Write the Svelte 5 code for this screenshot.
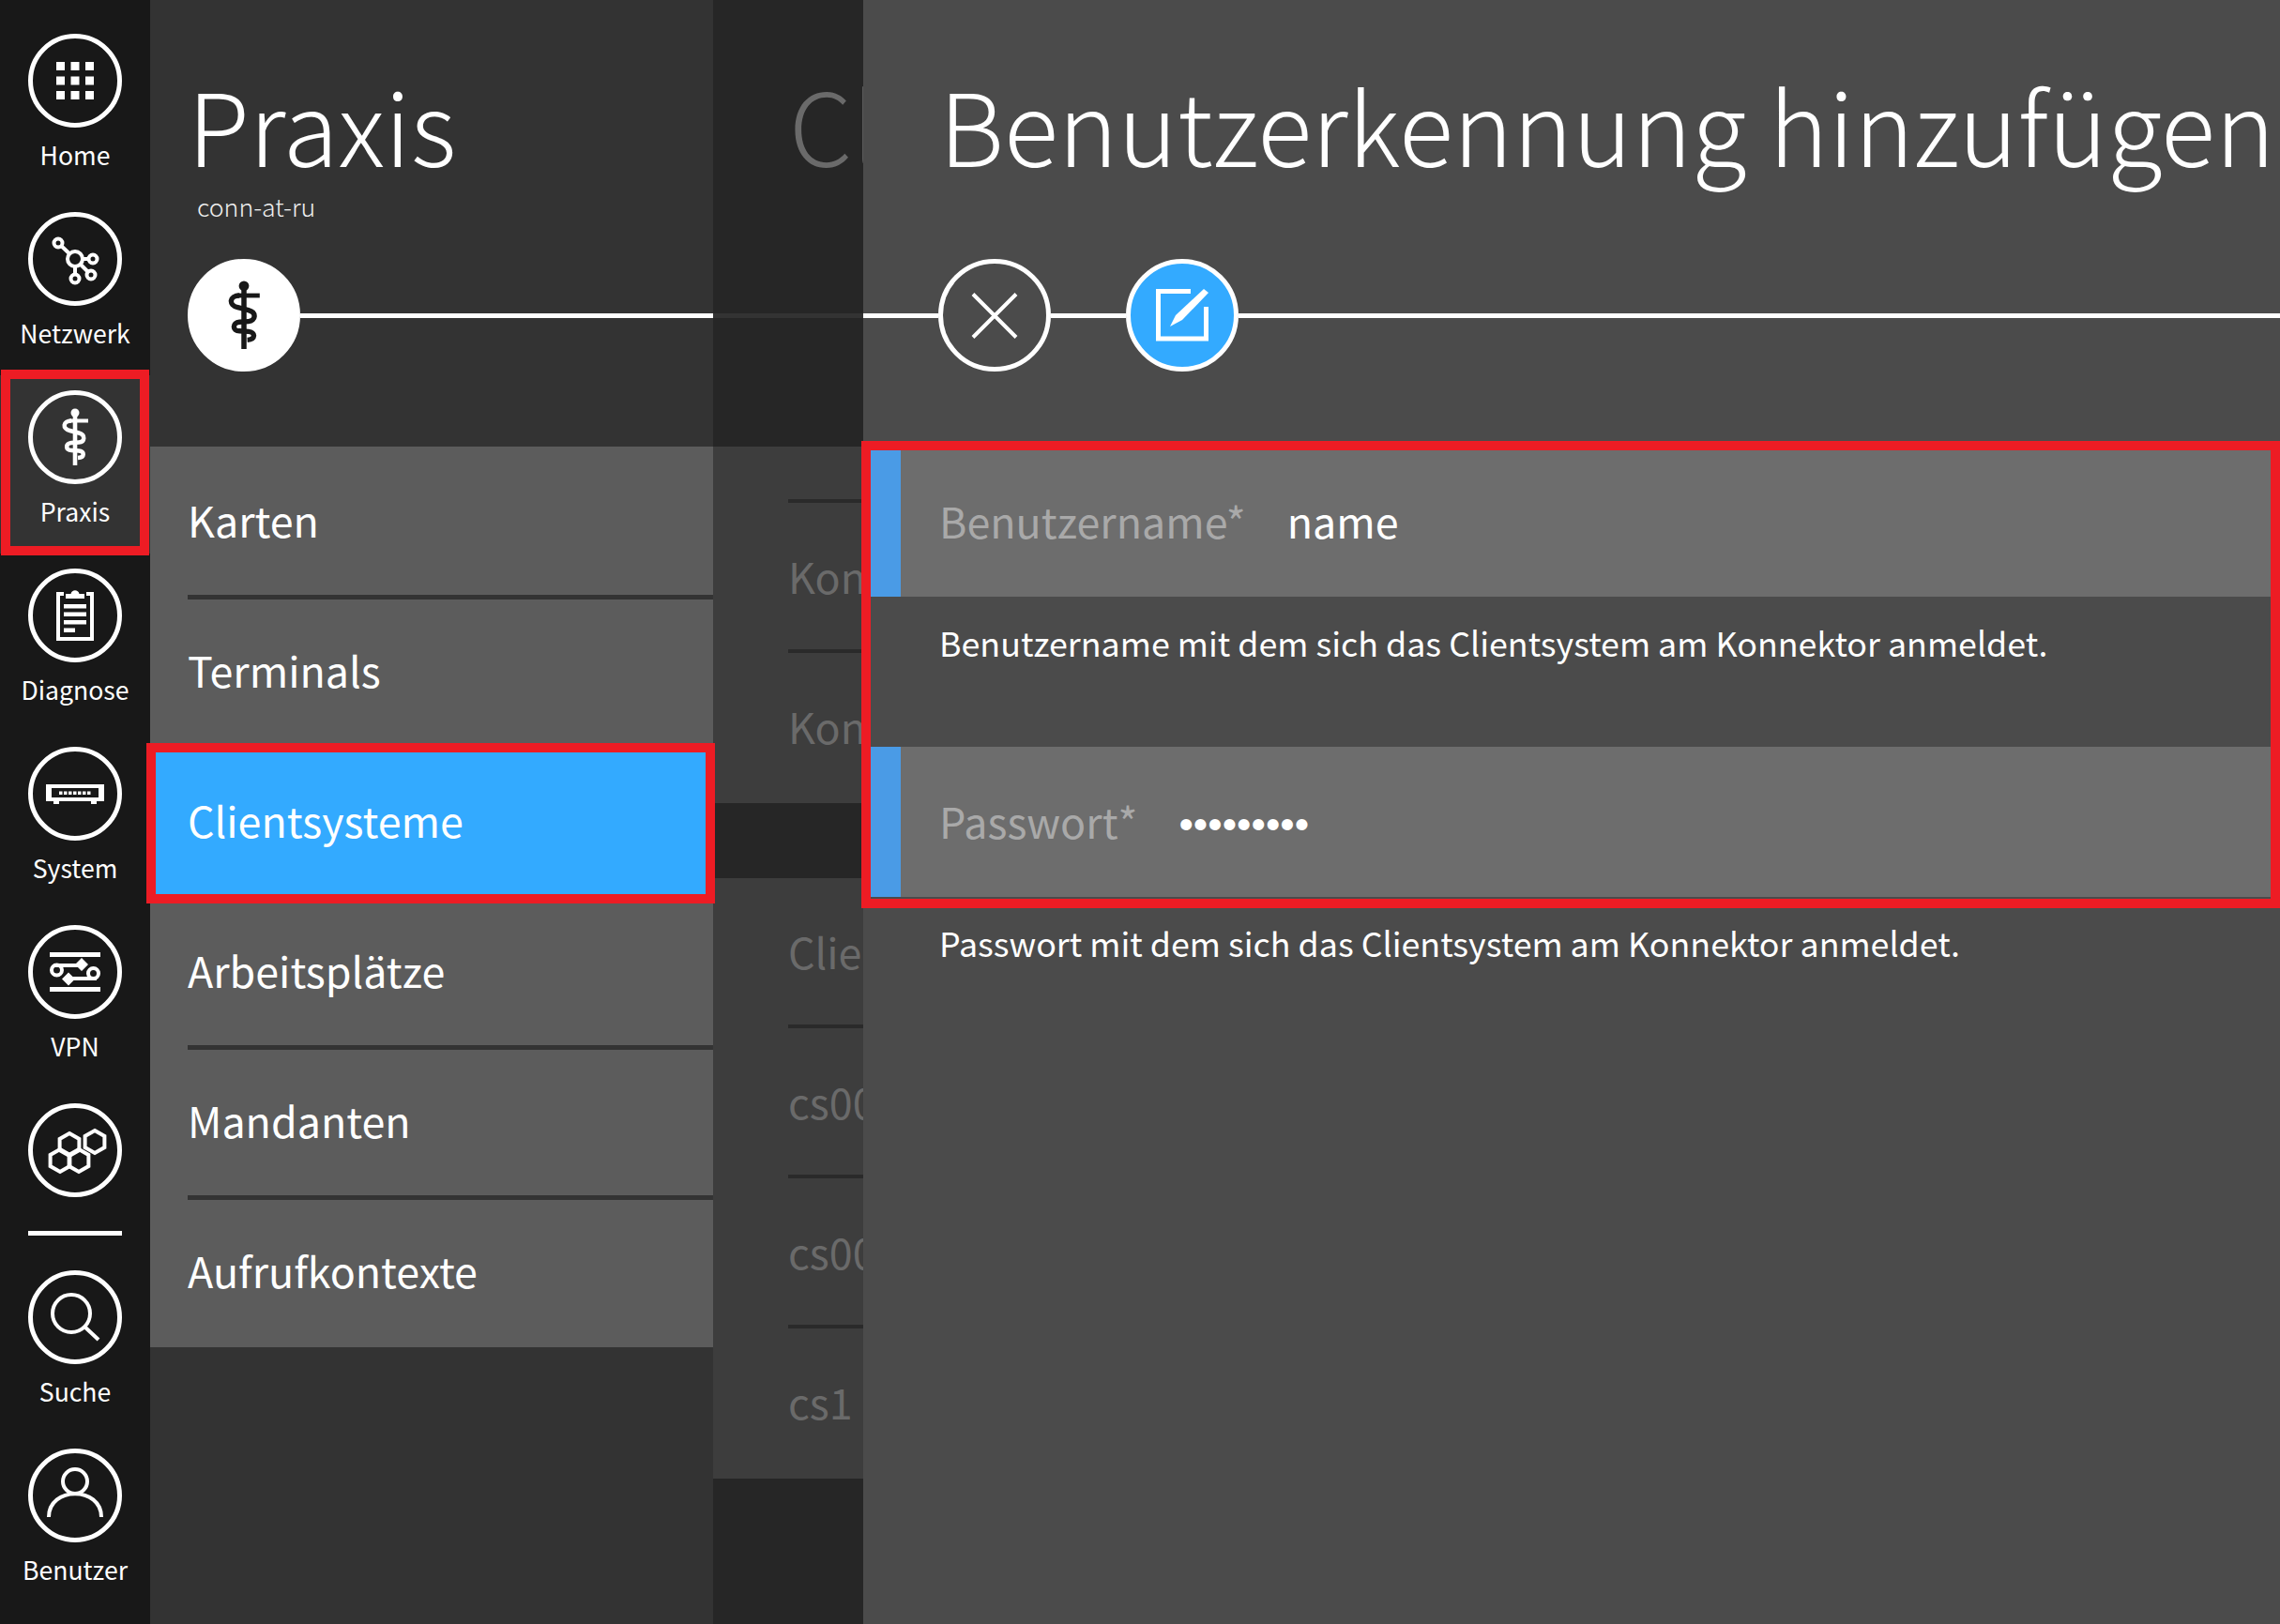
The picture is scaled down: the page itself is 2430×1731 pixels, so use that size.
<script lang="ts">
	const menu = ['Karten', 'Terminals', 'Clientsysteme', 'Arbeitsplätze', 'Mandanten', 'Aufrufkontexte'];
	const activeMenu = 'Clientsysteme';
	const hexes = [
		[44, 44],
		[34, 61],
		[54, 61],
		[71, 41]
	];
	const hexPoints = (cx: number, cy: number) => {
		const r = 12;
		const w = r * 0.866;
		return `${cx},${cy - r} ${cx + w},${cy - r / 2} ${cx + w},${cy + r / 2} ${cx},${cy + r} ${cx - w},${cy + r / 2} ${cx - w},${cy - r / 2}`;
	};
</script>

{#snippet rod()}
	<path class="fill" d="M47.700 24h4.600v56h-4.600z" />
	<circle class="fill" cx="50" cy="24" r="4.500" />
	<path class="fill" d="M44 30.500h20v4H44z" />
	<path class="snake" d="M46 32.500C37 32.500 36 41 44.500 43l9.500 2.500c7.500 2 6.500 9.500 0 10l-8 .5c-6.500 .5-6.500 8 0 8l8 .5c6.500 .5 6.500 7-1 7.500" />
{/snippet}

{#snippet navIcon(name: string)}
	<svg class="ring-icon" viewBox="0 0 100 100">
		<circle class="ring" cx="50" cy="50" r="47.500" />
		{#if name === 'Home'}
			{#each [30, 45.5, 61] as y}
				{#each [30, 45.5, 61] as x}
					<rect class="fill" {x} {y} width="9" height="9" />
				{/each}
			{/each}
		{:else if name === 'Netzwerk'}
			<path d="M32 33l18 17M50 50l19 0M50 50v21M50 50l17 17" />
			<circle class="hole" cx="50" cy="50" r="8" />
			<circle class="hole" cx="32" cy="33" r="4.500" />
			<circle class="hole" cx="69" cy="50" r="4.500" />
			<circle class="hole" cx="50" cy="71" r="4.500" />
			<circle class="hole" cx="67" cy="67" r="4.500" />
		{:else if name === 'Praxis'}
			{@render rod()}
		{:else if name === 'Diagnose'}
			<path d="M38 27H32V75H68V27H62" />
			<path class="fill" d="M40 32v-5h5.500c1-5 8-5 9 0H60v5z" />
			<path class="fill" d="M38 38h24v4.500H38zM38 46.500h24V51H38zM38 55h24v4.500H38zM38 63.500h12V68H38z" />
		{:else if name === 'System'}
			<path class="fill" fill-rule="evenodd" d="M19 40H81V58H19zM25 44V54H75V44z" />
			<path class="fill" d="M27 58h6v3h-6zM67 58h6v3h-6z" />
			{#each [33, 38, 43, 48, 53, 58, 63] as x}
				<rect class="fill" {x} y="47.500" width="3.500" height="3.500" />
			{/each}
		{:else if name === 'VPN'}
			<path class="fill" d="M23 29h54v5H23zM23 66h54v5H23z" />
			<path d="M27 43H54M73 57H46" />
			<circle cx="30.500" cy="48" r="5.500" />
			<circle cx="69.500" cy="51.500" r="5.500" />
			<path class="fill" d="M57 35l7 7-7 7-7-7zM43 50.500l7 7-7 7-7-7z" />
		{:else if name === 'Module'}
			{#each hexes as [x, y]}
				<polygon points={hexPoints(x, y)} />
			{/each}
		{:else if name === 'Suche'}
			<circle cx="46" cy="46" r="20" />
			<path d="M60 60l15 14" />
		{:else if name === 'Benutzer'}
			<circle cx="50" cy="35" r="13" />
			<path d="M22 73c0-33 56-33 56 0" />
		{/if}
	</svg>
{/snippet}

{#snippet navItem(name: string, label: string, active = false)}
	<div class="nav-item" class:active class:bare={!label}>
		{@render navIcon(name)}
		{#if label}<span>{label}</span>{/if}
	</div>
{/snippet}

<div class="page">
	<nav class="sidebar">
		{@render navItem('Home', 'Home')}
		{@render navItem('Netzwerk', 'Netzwerk')}
		{@render navItem('Praxis', 'Praxis', true)}
		{@render navItem('Diagnose', 'Diagnose')}
		{@render navItem('System', 'System')}
		{@render navItem('VPN', 'VPN')}
		{@render navItem('Module', '')}
		<hr />
		{@render navItem('Suche', 'Suche')}
		{@render navItem('Benutzer', 'Benutzer')}
	</nav>

	<section class="panel praxis">
		<header>
			<h1>Praxis</h1>
			<p class="sub">conn-at-ru</p>
			<div class="track">
				<div class="round solid">
					<svg viewBox="0 0 100 100">{@render rod()}</svg>
				</div>
				<i></i>
			</div>
		</header>
		<ul class="menu">
			{#each menu as item}
				<li class:active={item === activeMenu}>{item}</li>
			{/each}
		</ul>
	</section>

	<section class="panel behind">
		<header>
			<h1>Clientsysteme</h1>
			<div class="track"><i></i></div>
		</header>
		<div class="group first">
			<div class="row stub"></div>
			<div class="row">Konnektor</div>
			<div class="row">Konnektor</div>
		</div>
		<div class="group">
			<div class="row">Clientsystem</div>
			<div class="row">cs001</div>
			<div class="row">cs002</div>
			<div class="row">cs1</div>
		</div>
	</section>

	<section class="panel form">
		<header>
			<h1>Benutzerkennung hinzufügen</h1>
			<div class="track">
				<i class="lead"></i>
				<div class="round close">
					<svg viewBox="0 0 120 120"><path d="M37 37.500l46 46M83 37.500l-46 46" /></svg>
				</div>
				<i class="link"></i>
				<div class="round primary">
					<svg viewBox="0 0 120 120">
						<path d="M69 34.500H34.500V85H85.500V51" />
						<path class="fill" d="M47 72l6-12 30-28 5 4-28 29z" />
					</svg>
				</div>
				<i></i>
			</div>
		</header>
		<label class="field">
			<span class="name">Benutzername*</span>
			<input type="text" value="name" />
		</label>
		<p class="help">Benutzername mit dem sich das Clientsystem am Konnektor anmeldet.</p>
		<label class="field">
			<span class="name">Passwort*</span>
			<input class="secret" type="password" value="passwort1" />
		</label>
		<p class="help">Passwort mit dem sich das Clientsystem am Konnektor anmeldet.</p>
	</section>

	<!-- red annotation boxes from the manual -->
	<div class="mark mark-nav"></div>
	<div class="mark mark-menu"></div>
	<div class="mark mark-form"></div>
</div>

<style>
	:global(body) {
		margin: 0;
		background: #181818;
	}
	.page {
		position: relative;
		display: grid;
		grid-template-columns: 160px 600px 160px 1510px;
		width: 2430px;
		height: 1731px;
		overflow: hidden;
		font-family: 'Noto Sans CJK SC', 'Open Sans', sans-serif;
		color: #fff;
	}
	svg {
		display: block;
		fill: none;
		stroke: currentColor;
		stroke-width: 4;
	}
	svg .fill {
		fill: currentColor;
		stroke: none;
	}
	svg .hole {
		fill: #181818;
	}
	svg .snake {
		stroke-width: 4.500;
	}

	.sidebar {
		background: #181818;
		padding-top: 20px;
	}
	.nav-item {
		display: flex;
		flex-direction: column;
		align-items: center;
		height: 190px;
		box-sizing: border-box;
		padding-top: 16px;
		font-size: 26.6px;
		line-height: 40px;
	}
	.nav-item.active {
		background: #333;
	}
	.nav-item.bare {
		height: 130px;
	}
	.nav-item span {
		margin-top: 9px;
	}
	.ring-icon {
		width: 100px;
		height: 100px;
	}
	.ring {
		stroke-width: 5;
	}
	hr {
		width: 100px;
		height: 5px;
		margin: 22px auto 21px;
		border: 0;
		background: #fff;
	}

	.panel {
		min-width: 0;
		overflow: hidden;
	}
	header {
		height: 476px;
		box-sizing: border-box;
		padding-top: 63px;
		position: relative;
	}
	h1 {
		margin: 0;
		font-size: 107.5px;
		font-weight: 200;
		line-height: 136px;
		white-space: nowrap;
	}
	.track {
		position: absolute;
		top: 276px;
		left: 0;
		right: 0;
		height: 120px;
		display: flex;
		align-items: center;
	}
	.track i {
		flex: 1;
		height: 5px;
		background: #fff;
	}
	.round {
		flex: none;
		width: 120px;
		height: 120px;
		box-sizing: border-box;
		border: 5px solid #fff;
		border-radius: 50%;
		display: flex;
		align-items: center;
		justify-content: center;
	}
	.round svg {
		flex: none;
		width: 120px;
		height: 120px;
		stroke-width: 5;
	}
	.round.close svg {
		stroke-width: 4;
	}
	.round.solid {
		background: #fff;
		color: #181818;
	}
	.round.solid svg {
		stroke-width: 4;
	}
	.round.primary {
		background: #33aaff;
	}

	.praxis {
		background: #333;
	}
	.praxis header {
		padding-left: 40px;
	}
	.praxis .track {
		left: 40px;
	}
	.sub {
		margin: 3px 0 0 10px;
		font-size: 26.7px;
		font-weight: 200;
		line-height: 36px;
		color: #eee;
	}
	.menu {
		margin: 0;
		padding: 0;
		list-style: none;
		background: #5c5c5c;
	}
	.menu li {
		position: relative;
		height: 160px;
		box-sizing: border-box;
		padding-left: 40px;
		font-size: 44.8px;
		line-height: 156px;
	}
	.menu li:not(:last-child)::after {
		content: '';
		position: absolute;
		left: 40px;
		right: 0;
		bottom: -3px;
		height: 5px;
		background: #333;
	}
	.menu li.active {
		background: #33aaff;
	}

	.behind {
		background: #262626;
		color: #6a6a6a;
	}
	.behind header {
		padding-left: 81px;
	}
	.behind .track i {
		background: #333;
	}
	.group {
		margin-top: 80px;
		background: #3d3d3d;
		padding-left: 80px;
		font-size: 44.8px;
		white-space: nowrap;
	}
	.group.first {
		margin-top: 0;
	}
	.row {
		height: 160px;
		line-height: 155px;
		box-sizing: border-box;
		border-bottom: 4px solid #2a2a2a;
	}
	.row.stub {
		height: 60px;
	}
	.group .row:last-child {
		border-bottom: 0;
	}

	.form {
		background: #4b4b4b;
	}
	.form header {
		padding-left: 81px;
	}
	.track .lead {
		flex: none;
		width: 80px;
	}
	.track .link {
		flex: none;
		width: 80px;
	}
	.field {
		display: flex;
		align-items: center;
		gap: 44px;
		height: 160px;
		box-sizing: border-box;
		padding: 0 0 4px 41px;
		background: #6d6d6d;
		border-left: 40px solid #4a9be6;
		font-size: 44.8px;
	}
	.name {
		color: #a9a9a9;
	}
	input {
		flex: 1;
		min-width: 0;
		padding: 0;
		border: 0;
		outline: 0;
		background: none;
		color: #fff;
		font: inherit;
	}
	input.secret {
		margin-top: 10px;
		font-family: 'Liberation Sans', sans-serif;
		font-size: 44px;
	}
	.help {
		height: 160px;
		box-sizing: border-box;
		margin: 0;
		padding: 23px 0 0 81px;
		font-size: 35.8px;
		line-height: 50px;
	}

	.mark {
		position: absolute;
		box-sizing: border-box;
		border: 10px solid #ed1c24;
		pointer-events: none;
	}
	.mark-nav {
		left: 1px;
		top: 394px;
		width: 158px;
		height: 198px;
	}
	.mark-menu {
		left: 156px;
		top: 792px;
		width: 606px;
		height: 171px;
	}
	.mark-form {
		left: 918px;
		top: 470px;
		width: 1512px;
		height: 498px;
	}
</style>
